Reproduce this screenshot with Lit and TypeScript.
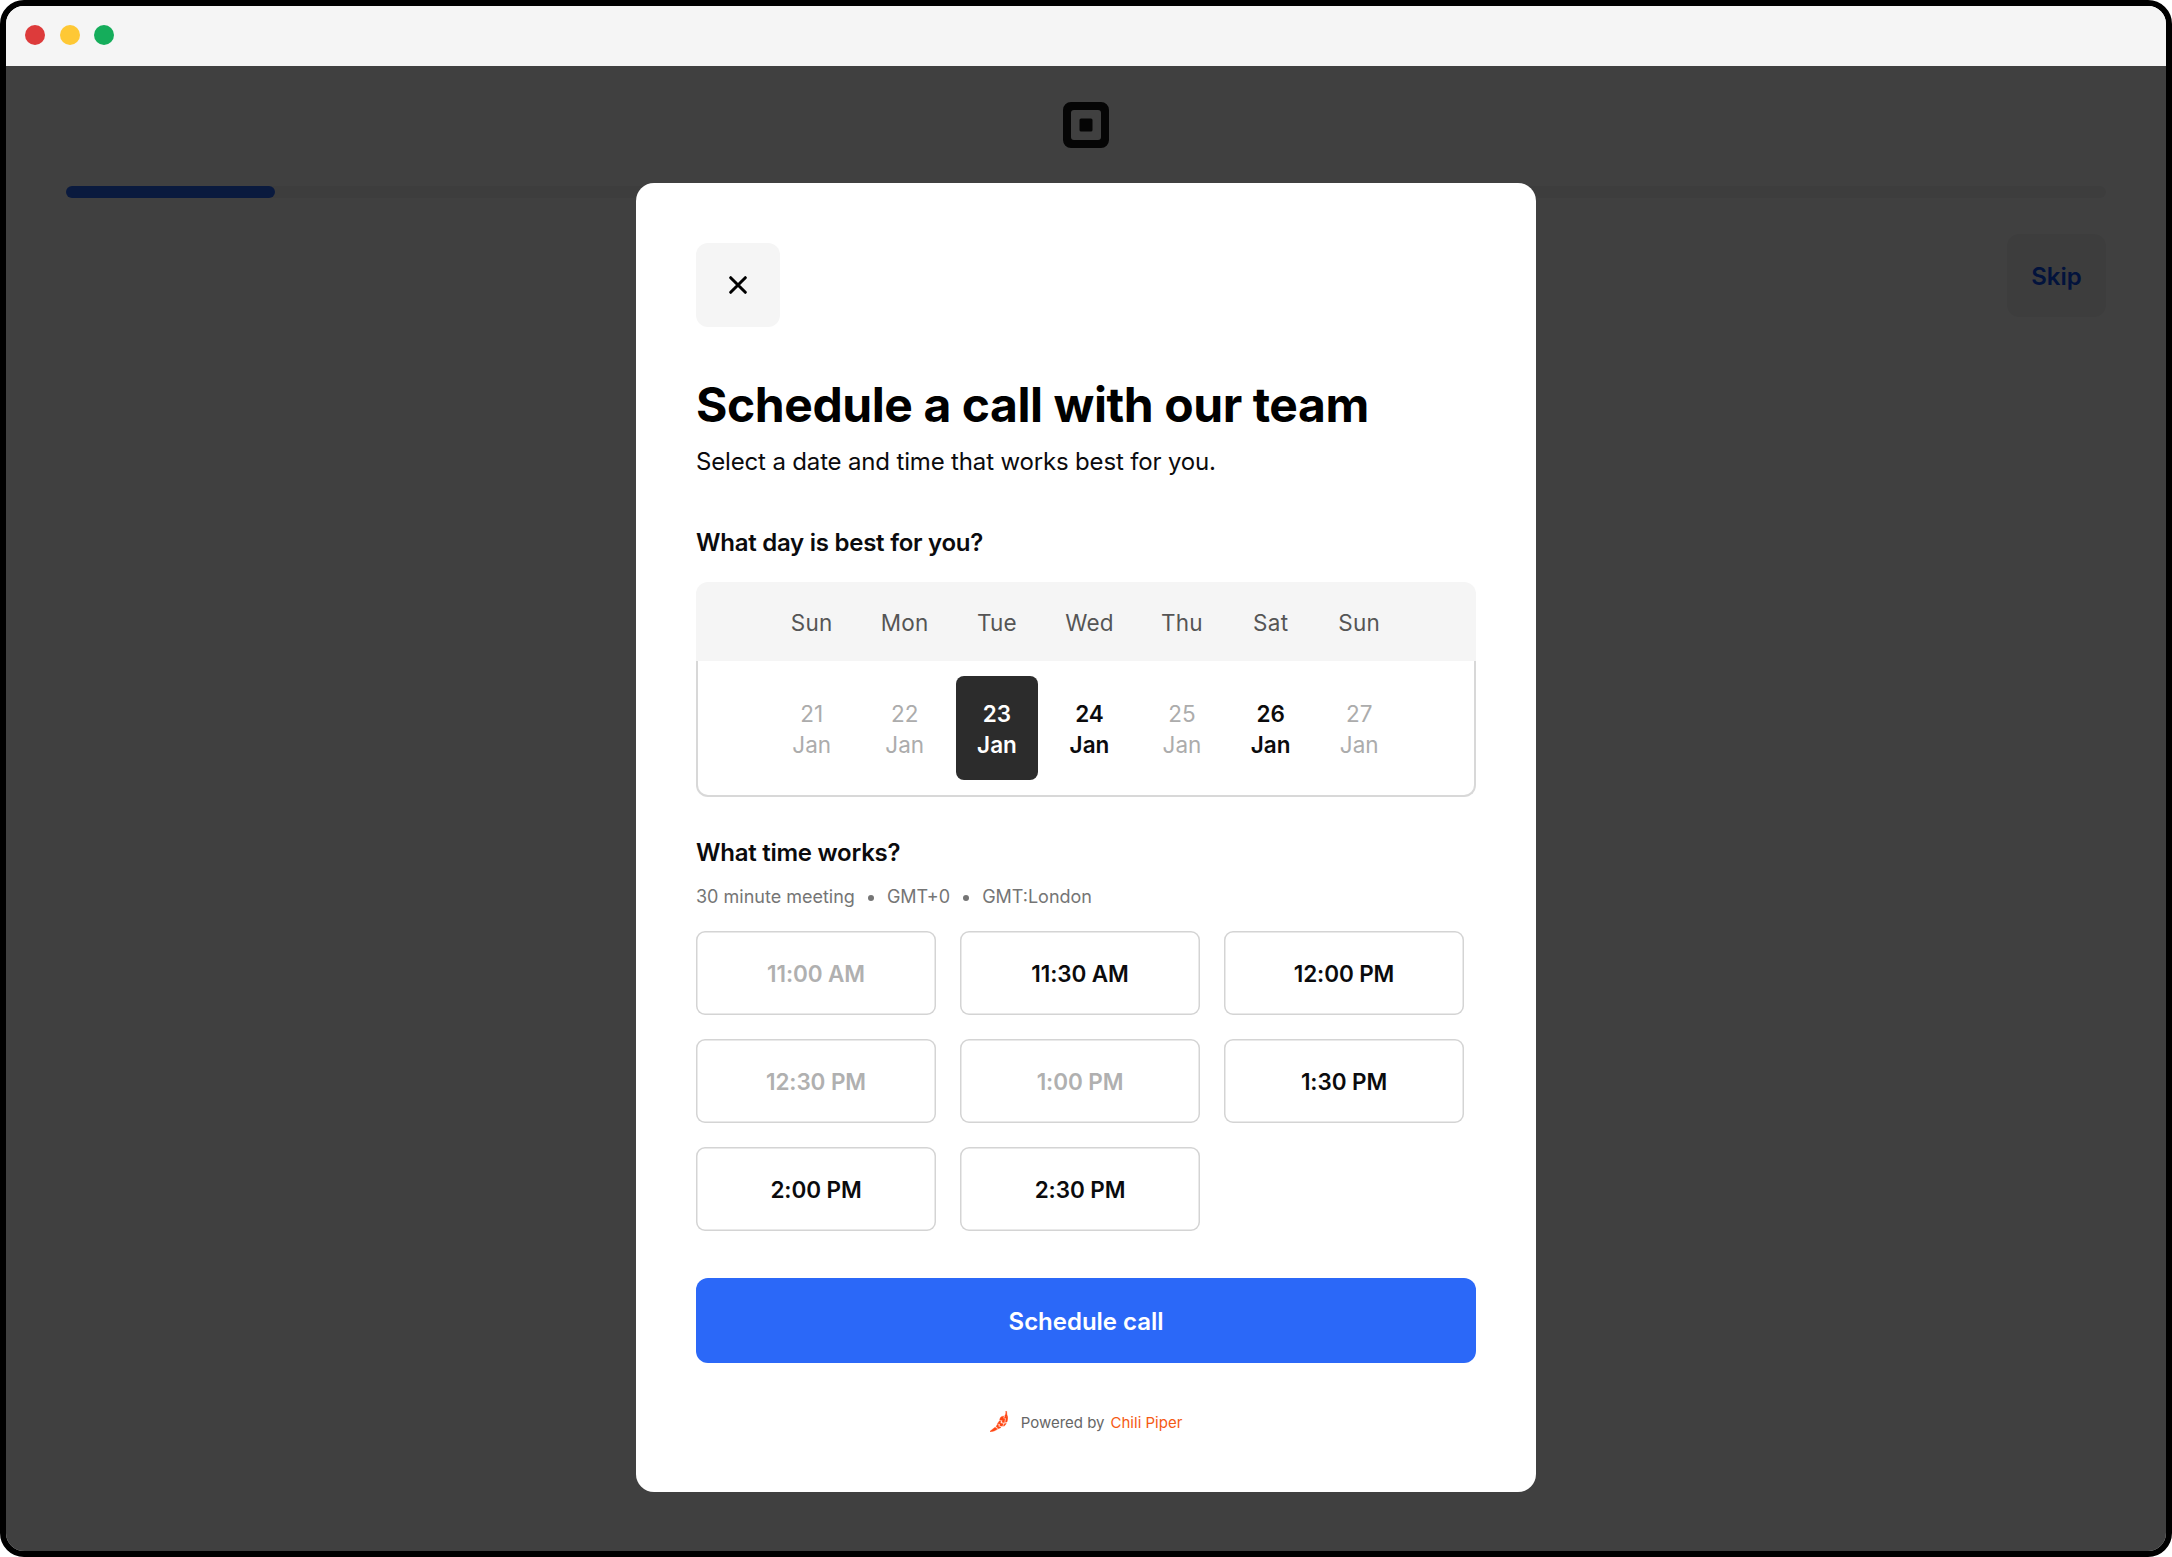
import { LitElement, html, css, svg } from "lit";
import { customElement, property, state } from "lit/decorators.js";
import { classMap } from "lit/directives/class-map.js";

interface Day {
  name: string;
  date: number;
  open: boolean;
}

interface Slot {
  label: string;
  open: boolean;
}

const DAYS: Day[] = [
  { name: "Sun", date: 21, open: false },
  { name: "Mon", date: 22, open: false },
  { name: "Tue", date: 23, open: true },
  { name: "Wed", date: 24, open: true },
  { name: "Thu", date: 25, open: false },
  { name: "Sat", date: 26, open: true },
  { name: "Sun", date: 27, open: false },
];

const SLOTS: Slot[] = [
  { label: "11:00 AM", open: false },
  { label: "11:30 AM", open: true },
  { label: "12:00 PM", open: true },
  { label: "12:30 PM", open: false },
  { label: "1:00 PM", open: false },
  { label: "1:30 PM", open: true },
  { label: "2:00 PM", open: true },
  { label: "2:30 PM", open: true },
];

const squareLogo = html`<svg width="46" height="46" viewBox="0 0 46 46">
  ${svg`<path fill="#141414" fill-rule="evenodd" d="M8 0h30a8 8 0 0 1 8 8v30a8 8 0 0 1-8 8H8a8 8 0 0 1-8-8V8a8 8 0 0 1 8-8Zm3 8a3 3 0 0 0-3 3v24a3 3 0 0 0 3 3h24a3 3 0 0 0 3-3V11a3 3 0 0 0-3-3Z"/>
  <rect x="16.5" y="16.5" width="13" height="13" rx="1.5" fill="#141414"/>`}
</svg>`;

const closeIcon = html`<svg width="18" height="18" viewBox="0 0 18 18">
  ${svg`<path d="M1.7 1.7 16.3 16.3M16.3 1.7 1.7 16.3" stroke="#000" stroke-width="3" stroke-linecap="round"/>`}
</svg>`;

const chiliIcon = html`<svg width="18" height="21" viewBox="0 0 54 63">
  ${svg`<g fill="#ff4713" stroke="#ff4713" stroke-width="1" stroke-linejoin="round">
    <path d="M47 1l3 0c1 6 0 10 2 14l-8 0c3-4 4-8 3-14Z"/>
    <path d="M34 17l7-2-1 7 5 1-2 12-7-1 1-6-8 0c0-5 2-9 5-11Z"/>
    <path d="M45 15l8 1c1 6 0 11-2 17l-5 1 2-12-5-1Z"/>
    <path d="M28 30l5 1-2 5 9 2-3 8-8-2 1-5-8-1Z"/>
    <path d="M43 38l6-1c-2 4-4 7-8 9l-1-1Z"/>
    <path d="M22 40l4 1-1 5 8 3c-3 3-6 4-9 4l-3-5-3-1Z"/>
    <path d="M0 61c5-4 10-9 15-12l8 5c-6 5-14 8-23 8Z"/>
  </g>`}
</svg>`;

/** Seven-day picker: a weekday header over one row of dates. */
@customElement("day-picker")
class DayPicker extends LitElement {
  @property({ attribute: false }) days: Day[] = [];
  @state() private selected = 23;

  static styles = css`
    :host {
      display: block;
      font-size: 22.5px;
      line-height: 31.5px;
      text-align: center;
    }
    .row {
      display: grid;
      grid-template-columns: 93px 93px 91.6px 93.4px 91.6px 85.8px 91.4px;
      justify-items: center;
      align-items: center;
      box-sizing: border-box;
      padding-left: 69.2px;
    }
    .head {
      height: 79px;
      padding-top: 2px;
      border-radius: 12px 12px 0 0;
      background: #f5f5f5;
      color: #555;
      letter-spacing: 0.25px;
    }
    .body {
      height: 136px;
      border: solid #d8d8d8;
      border-width: 0 2px 2px;
      border-radius: 0 0 12px 12px;
      padding-left: 67.2px;
    }
    .day {
      box-sizing: border-box;
      width: 82px;
      height: 104px;
      padding: 2px 0 0;
      border: 0;
      border-radius: 8px;
      background: none;
      font: inherit;
      color: #acacac;
    }
    .day span {
      display: block;
    }
    .open {
      color: #0b0b0d;
      font-weight: 600;
    }
    .selected {
      background: #2c2c2c;
      color: #fff;
    }
  `;

  render() {
    return html`
      <div class="row head">${this.days.map((d) => html`<span>${d.name}</span>`)}</div>
      <div class="row body">
        ${this.days.map(
          (d) => html`<button
            class=${classMap({ day: true, open: d.open, selected: d.date === this.selected })}
            @click=${() => d.open && (this.selected = d.date)}
          >
            <span>${d.date}</span><span>Jan</span>
          </button>`,
        )}
      </div>
    `;
  }
}

/** Grid of bookable meeting times. */
@customElement("time-slots")
class TimeSlots extends LitElement {
  @property({ attribute: false }) slots: Slot[] = [];

  static styles = css`
    :host {
      display: grid;
      grid-template-columns: repeat(3, 240px);
      gap: 24px;
    }
    .slot {
      height: 84px;
      padding: 0;
      border: 0;
      border-radius: 9px;
      box-shadow: inset 0 0 0 1.5px #d4d4d4;
      background: #fff;
      font: 600 22.5px Inter, sans-serif;
      letter-spacing: -0.1px;
      color: #b0b0b0;
    }
    .open {
      color: #0b0b0d;
    }
  `;

  render() {
    return this.slots.map(
      (s) => html`<button class=${classMap({ slot: true, open: s.open })}>${s.label}</button>`,
    );
  }
}

@customElement("app-root")
class AppRoot extends LitElement {
  static styles = css`
    :host {
      display: block;
      background: #fff;
      font-family: Inter, sans-serif;
      color: #0b0b0d;
    }
    .window {
      display: flex;
      flex-direction: column;
      box-sizing: border-box;
      width: 2172px;
      height: 1557px;
      border: 6px solid #000;
      border-radius: 24px;
      overflow: hidden;
    }
    .titlebar {
      display: flex;
      align-items: center;
      gap: 14.6px;
      box-sizing: border-box;
      height: 60px;
      padding: 0 0 2px 19.3px;
      background: #f5f5f5;
    }
    .dot {
      width: 20px;
      height: 20px;
      border-radius: 50%;
    }
    .red { background: #dd3b3b; }
    .yellow { background: #fec835; }
    .green { background: #15ad5b; }
    .page {
      position: relative;
      flex: 1;
      display: flex;
      flex-direction: column;
      padding: 36px 60px 0;
    }
    .logo {
      display: flex;
      justify-content: center;
      height: 46px;
    }
    .track {
      height: 12px;
      margin-top: 38px;
      border-radius: 6px;
      background: #f3f3f3;
    }
    .fill {
      height: 100%;
      border-radius: 6px;
      background: #2b68f8;
    }
    .skip {
      align-self: flex-end;
      width: 99px;
      height: 83px;
      margin-top: 36px;
      padding: 2px 0 0;
      border: 0;
      border-radius: 12px;
      background: #f3f3f3;
      font: 600 24px Inter, sans-serif;
      color: #0a4cf0;
    }
    .backdrop {
      position: absolute;
      inset: 0;
      display: flex;
      justify-content: center;
      align-items: flex-start;
      padding-top: 117px;
      background: rgba(0, 0, 0, 0.75);
    }
    .modal {
      display: flex;
      flex-direction: column;
      box-sizing: border-box;
      width: 900px;
      height: 1309px;
      padding: 60px 60px 0;
      border-radius: 18px;
      background: #fff;
    }
    .close {
      display: flex;
      align-items: center;
      justify-content: center;
      width: 84px;
      height: 84px;
      padding: 0;
      border: 0;
      border-radius: 12px;
      background: #f5f5f5;
    }
    h1 {
      margin: 49px 0 0;
      font-size: 48px;
      line-height: 58px;
      font-weight: 700;
      letter-spacing: -0.43px;
      color: #000;
    }
    .lead {
      margin: 10px 0 0;
      font-size: 24px;
      line-height: 36px;
      letter-spacing: -0.16px;
    }
    h2 {
      margin: 45px 0 21px;
      font-size: 24px;
      line-height: 36px;
      font-weight: 600;
      letter-spacing: -0.25px;
    }
    .time-title {
      margin: 38px 0 13px;
    }
    .meta {
      display: flex;
      align-items: center;
      gap: 13px;
      margin-bottom: 21px;
      font-size: 18px;
      line-height: 26px;
      color: #757575;
    }
    .bullet {
      width: 6px;
      height: 6px;
      margin-top: 1px;
      border-radius: 50%;
      background: #757575;
    }
    .submit {
      height: 85px;
      margin-top: 47px;
      padding: 1px 0 0;
      border: 0;
      border-radius: 12px;
      background: #2b68f8;
      font: 600 24px Inter, sans-serif;
      letter-spacing: -0.03px;
      color: #fff;
    }
    .powered {
      display: flex;
      align-items: center;
      justify-content: center;
      margin-top: 46px;
      font-size: 15px;
      line-height: 22px;
      color: #666;
    }
    .powered svg {
      margin-right: 13px;
    }
    .powered span {
      padding-top: 3px;
    }
    .powered .brand {
      margin-left: 6px;
      color: #f55a14;
    }
  `;

  @state() private progress = 10.245;

  render() {
    return html`
      <div class="window">
        <div class="titlebar">
          <span class="dot red"></span><span class="dot yellow"></span><span class="dot green"></span>
        </div>
        <div class="page">
          <div class="logo">${squareLogo}</div>
          <div class="track"><div class="fill" style="width:${this.progress}%"></div></div>
          <button class="skip">Skip</button>
          <div class="backdrop">
            <section class="modal">
              <button class="close">${closeIcon}</button>
              <h1>Schedule a call with our team</h1>
              <p class="lead">Select a date and time that works best for you.</p>
              <h2>What day is best for you?</h2>
              <day-picker .days=${DAYS}></day-picker>
              <h2 class="time-title">What time works?</h2>
              <div class="meta">
                <span>30 minute meeting</span><span class="bullet"></span><span>GMT+0</span
                ><span class="bullet"></span><span>GMT:London</span>
              </div>
              <time-slots .slots=${SLOTS}></time-slots>
              <button class="submit">Schedule call</button>
              <div class="powered">
                ${chiliIcon}<span>Powered by</span><span class="brand">Chili Piper</span>
              </div>
            </section>
          </div>
        </div>
      </div>
    `;
  }
}
